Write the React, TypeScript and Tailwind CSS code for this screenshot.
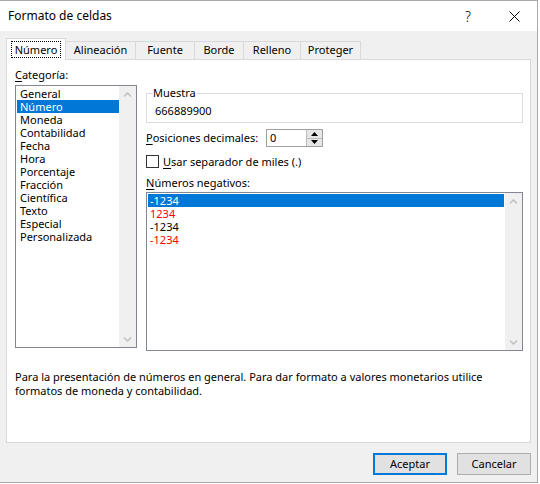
import React from "react";

const categories = [
  "General",
  "Número",
  "Moneda",
  "Contabilidad",
  "Fecha",
  "Hora",
  "Porcentaje",
  "Fracción",
  "Científica",
  "Texto",
  "Especial",
  "Personalizada",
];

const tabs = [
  { label: "Alineación", w: "w-[70px]" },
  { label: "Fuente", w: "w-[59px]" },
  { label: "Borde", w: "w-[49px]" },
  { label: "Relleno", w: "w-[57px]" },
  { label: "Proteger", w: "w-[60px]" },
];

const negatives = [
  { text: "-1234", cls: "bg-[#0078d7] text-white" },
  { text: "1234", cls: "text-[#ff0000]" },
  { text: "-1234", cls: "text-black" },
  { text: "-1234", cls: "text-[#ff0000]" },
];

const Chevron = ({ down }: { down?: boolean }) => (
  <svg width="9" height="6" viewBox="0 0 9 6">
    <path
      d={down ? "M1 1.5 L4.5 5 L8 1.5" : "M1 4.5 L4.5 1 L8 4.5"}
      fill="none"
      stroke="#c2c2c2"
      strokeWidth="1.6"
    />
  </svg>
);

// disabled scrollbar, arrows only
const ScrollBar = () => (
  <div className="w-[17px] shrink-0 bg-[#f0f0f0] flex flex-col justify-between">
    <div className="h-[17px] flex items-center justify-center">
      <Chevron />
    </div>
    <div className="h-[17px] flex items-center justify-center">
      <Chevron down />
    </div>
  </div>
);

export default function App() {
  return (
    <div className="w-[540px] h-[484px] bg-white font-['Noto_Sans','Liberation_Sans',sans-serif] text-[11px] text-black overflow-hidden">
      <div className="w-[538px] h-[483px] flex flex-col border-t border-r border-b border-[#a9a9a9] bg-[#f0f0f0]">
        {/* Title bar */}
        <div className="h-[30px] shrink-0 bg-white flex items-center">
          <span className="pl-[8px] text-[12px] flex-1">Formato de celdas</span>
          <div className="w-[46px] h-full flex items-center justify-center text-[14px] font-light">?</div>
          <div className="w-[46px] h-full flex items-center justify-center">
            <svg width="11" height="11" viewBox="0 0 11 11">
              <path d="M0.5 0.5 L10.5 10.5 M10.5 0.5 L0.5 10.5" stroke="#000" strokeWidth="1" />
            </svg>
          </div>
        </div>

        <div className="flex-1 flex flex-col pt-[7px] pl-[6px] pr-[6px]">
          {/* Tabs */}
          <div className="h-[21px] flex items-end relative z-10">
            <div className="w-[60px] h-[22px] -mb-px bg-white border border-b-0 border-[#d9d9d9] flex items-center justify-center">
              <span className="border border-dotted border-black px-[3px] leading-[15px]">Número</span>
            </div>
            {tabs.map((t) => (
              <div
                key={t.label}
                className={`${t.w} h-[18px] border border-l-0 border-b-0 border-[#d9d9d9] flex items-center justify-center`}
              >
                {t.label}
              </div>
            ))}
          </div>

          {/* Panel */}
          <div className="h-[384px] bg-white border border-[#d9d9d9] flex flex-col pt-[8px] pl-[8px]">
            <div className="flex gap-[9px]">
              {/* Left column */}
              <div className="w-[122px] flex flex-col">
                <div className="h-[14px] leading-[14px]">
                  <span className="underline underline-offset-2">C</span>ategoría:
                </div>
                <div className="mt-[3px] h-[263px] border border-[#828790] flex">
                  <div className="flex-1 pt-[1px] pl-[1px]">
                    {categories.map((c) => (
                      <div
                        key={c}
                        className={`h-[13px] leading-[13px] pl-[3px] ${c === "Número" ? "bg-[#0078d7] text-white" : ""}`}
                      >
                        {c}
                      </div>
                    ))}
                  </div>
                  <ScrollBar />
                </div>
              </div>

              {/* Right column */}
              <div className="w-[377px] flex flex-col">
                <div className="relative mt-[25px] h-[30px] border border-[#dcdcdc] pl-[8px] pt-[10px] leading-[14px]">
                  <span className="absolute left-[5px] -top-[8px] bg-white px-[1px] leading-[14px]">Muestra</span>
                  666889900
                </div>

                <div className="mt-[6px] h-[18px] flex items-center">
                  <span className="w-[120px] shrink-0">
                    <span className="underline underline-offset-2">P</span>osiciones decimales:
                  </span>
                  <div className="w-[57px] h-[18px] border border-[#a0a0a0] flex">
                    <span className="flex-1 pl-[3px] leading-[16px]">0</span>
                    <div className="w-[16px] flex flex-col">
                      <div className="flex-1 bg-[#e6e6e6] border-l border-b border-[#bcbcbc] flex items-center justify-center">
                        <svg width="7" height="4" viewBox="0 0 7 4">
                          <path d="M0 4 L3.5 0 L7 4 Z" fill="#000" />
                        </svg>
                      </div>
                      <div className="flex-1 bg-[#e6e6e6] border-l border-[#bcbcbc] flex items-center justify-center">
                        <svg width="7" height="4" viewBox="0 0 7 4">
                          <path d="M0 0 L7 0 L3.5 4 Z" fill="#000" />
                        </svg>
                      </div>
                    </div>
                  </div>
                </div>

                <div className="mt-[8px] h-[13px] flex items-center gap-[4px]">
                  <div className="w-[13px] h-[13px] border border-[#333] bg-white shrink-0" />
                  <span className="leading-[13px]">
                    <span className="underline underline-offset-2">U</span>sar separador de miles (.)
                  </span>
                </div>

                <div className="mt-[8px] h-[14px] leading-[14px]">
                  <span className="underline underline-offset-2">N</span>úmeros negativos:
                </div>

                <div className="mt-[2px] h-[159px] border border-[#828790] flex">
                  <div className="flex-1 pt-[1px] pl-[1px] pr-[1px]">
                    {negatives.map((n, i) => (
                      <div key={i} className={`h-[13px] leading-[13px] pl-[2px] ${n.cls}`}>
                        {n.text}
                      </div>
                    ))}
                  </div>
                  <ScrollBar />
                </div>
              </div>
            </div>

            <p className="mt-[19px] leading-[14px]">
              Para la presentación de números en general. Para dar formato a valores monetarios utilice
              <br />
              formatos de moneda y contabilidad.
            </p>
          </div>

          {/* Buttons */}
          <div className="mt-[10px] flex justify-end gap-[10px]">
            <button className="w-[74px] h-[22px] bg-[#e1e1e1] border-2 border-[#0078d7] text-[11px]">Aceptar</button>
            <button className="w-[74px] h-[22px] bg-[#e1e1e1] border border-[#adadad] text-[11px]">Cancelar</button>
          </div>
        </div>
      </div>
    </div>
  );
}
